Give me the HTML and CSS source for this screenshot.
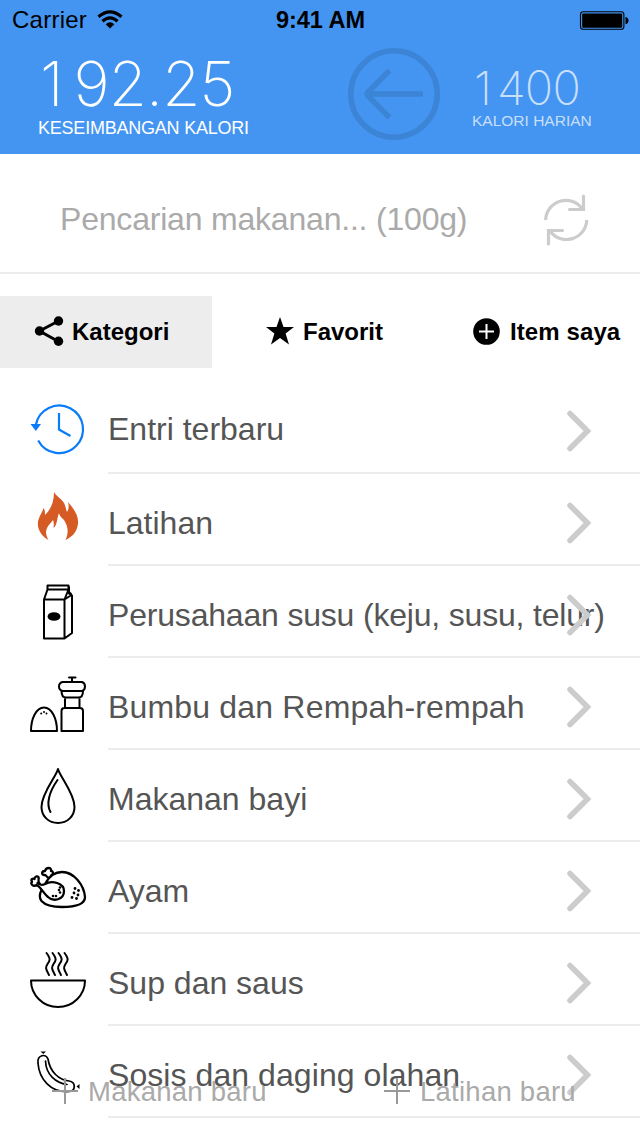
FILE: index.html
```html
<!DOCTYPE html>
<html lang="id">
<head>
<meta charset="utf-8">
<title>Kalori</title>
<link rel="stylesheet" href="styles.css">
</head>
<body>
<main class="screen">
  <header class="header">
    <div class="status">
      <div class="carrier"><span>Carrier</span>
        <svg width="26" height="20" viewBox="0 0 26 20"><g fill="none" stroke="#000" stroke-width="3.2"><path d="M1.5 6.8Q13-3.2 24.5 6.8"/><path d="M5.4 11.2Q13 4.5 20.6 11.2"/></g><path d="M8.7 14.2Q13 10.3 17.3 14.2L13 18.6Z"/></svg>
      </div>
      <div class="clock">9:41 AM</div>
      <svg class="battery" width="50" height="20" viewBox="0 0 50 20"><rect x="1.500" y=".8" width="43.4" height="17.4" rx="2.8" fill="none" stroke="#000" stroke-width="1.1"/><rect x="3.200" y="2.4" width="40" height="14.4" rx="1.2"/><path d="M46.500 6q3 .6 3 3.6t-3 3.6z"/></svg>
    </div>
    <div class="totals">
      <div class="balance"><div class="balance-value"><span class="lead">1</span>92.25</div><div class="balance-label">KESEIMBANGAN KALORI</div></div>
      <svg class="back" width="92" height="92" viewBox="0 0 92 92"><g fill="none" stroke="#3c84d5" stroke-width="5.6"><circle cx="46" cy="46" r="43.2"/><path d="M75 46H20M41.500 22.500L20 44Q18.500 46 20 48L41.500 69.500"/></g></svg>
      <div class="daily"><div class="daily-value"><span class="daily-lead">1</span>400</div><div class="daily-label">KALORI HARIAN</div></div>
    </div>
  </header>
  <section class="search">
    <span class="placeholder">Pencarian makanan... (100g)</span>
    <svg class="refresh" width="48" height="54" viewBox="0 0 48 54"><g fill="none" stroke="#ccc" stroke-width="3.200"><path d="M3.600 26A20.300 20.300 0 0 1 40.500 15M44.800 26A20.300 20.300 0 0 1 8 37"/><path stroke-linecap="round" d="M41.500 2V15.500H27.500M6.500 50V36.500H20.500"/></g></svg>
  </section>
  <nav class="tabs">
    <div class="tab tab-category"><svg width="30" height="30" viewBox="0 0 30 30"><path d="M24.500 5L5.500 15L24.500 25.500" fill="none" stroke="#000" stroke-width="3"/><circle cx="24.500" cy="5" r="4.700"/><circle cx="5.500" cy="15" r="4.700"/><circle cx="24.500" cy="25.200" r="4.700"/></svg><span>Kategori</span></div>
    <div class="tab tab-favorite"><svg width="28" height="28" viewBox="0 0 28 28"><path d="M14 0L17.500 10H28L19.600 16.600L23 27.500L14 21L5 27.500L8.400 16.600L0 10H10.500Z"/></svg><span>Favorit</span></div>
    <div class="tab tab-items"><svg width="27" height="27" viewBox="0 0 27 27"><circle cx="13.500" cy="13.500" r="13.300"/><path d="M13.500 6V21M6 13.500H21" stroke="#fff" stroke-width="2"/></svg><span>Item saya</span></div>
  </nav>
  <ul class="list">
    <li class="row first"><svg class="icon" viewBox="0 0 60 60"><g fill="none" stroke="#087cf9" stroke-width="2.200"><path d="M7.800 26A23.800 23.800 0 1 1 10.200 41.500"/><path d="M31 14V30.500L42.500 37"/></g><path d="M2.500 25H13L7.800 32Z" fill="#087cf9"/></svg><span class="name">Entri terbaru</span><svg class="chevron" viewBox="0 0 28 44"><path d="M5 4.500L22.500 22L5 39.500"/></svg></li>
    <li class="row"><svg class="icon" viewBox="0 0 60 60"><path fill="#d65a24" d="M26 1C28 5 33 7 36 12C38 16 38 19 39 21C41 18 41 14 40 11C45 17 51 24 50 33C49 41 44 46 37.500 49C41 42 40 35 36 29C33 26 31 24 31 22C29 27 29 35 25.500 37C26 34 26 31 25 29C22 33 18 36 18 42Q18.500 46 20.500 49C15 46 11 41 10 35C9 27 14 23 15.500 17C17 19 17 21 17 24C23 18 26 11 26 1Z"/></svg><span class="name">Latihan</span><svg class="chevron" viewBox="0 0 28 44"><path d="M5 4.500L22.500 22L5 39.500"/></svg></li>
    <li class="row"><svg class="icon line milk" viewBox="0 0 60 60"><path d="M16 17.500H36.500V56.500H16ZM19.500 3.500H40.500V7.500H19.500ZM19.500 7.500L16 17.500M40.500 7.500L36.500 17.500M41 5V11.500L44 13.500V51L36.500 56.500M36.500 17.500L43.500 13M40 9L43 12"/><ellipse cx="26" cy="34.500" rx="5.500" ry="3.300" fill="#000"/></svg><span class="name long">Perusahaan susu (keju, susu, telur)</span><svg class="chevron" viewBox="0 0 28 44"><path d="M5 4.500L22.500 22L5 39.500"/></svg></li>
    <li class="row"><svg class="icon line pepper" viewBox="0 0 60 60"><path d="M3 57C3 45 8 33.500 16 33.500S29 45 29 57ZM33.500 57V37Q33.500 34 36.500 34H52Q55 34 55 37V57ZM37 34V23.500H51.500V34M33.500 17C33.500 21 34.500 23.500 38 23.500H50.500C54 23.500 55 21 55 17M34.500 8H54Q57 9 57 12.500T54 17H34.500Q31 16 31 12.500T34.500 8ZM44 8V4M41 3.500H47.500"/><g fill="#000" stroke="none"><circle cx="13.200" cy="39.500" r="1"/><circle cx="16" cy="38" r="1"/><circle cx="18.500" cy="39.500" r="1"/></g></svg><span class="name bumbu">Bumbu dan Rempah-rempah</span><svg class="chevron" viewBox="0 0 28 44"><path d="M5 4.500L22.500 22L5 39.500"/></svg></li>
    <li class="row"><svg class="icon line drop" viewBox="0 0 60 60"><path d="M30 3C28 11 13.500 27 13.500 41C13.500 50 20.500 57 30 57S46.500 50 46.500 41C46.500 27 32 11 30 3ZM29.500 14C21 26 18 38 22.500 46"/></svg><span class="name">Makanan bayi</span><svg class="chevron" viewBox="0 0 28 44"><path d="M5 4.500L22.500 22L5 39.500"/></svg></li>
    <li class="row"><svg class="icon line chicken" viewBox="0 0 60 60"><g stroke-width="2.300"><path d="M17.500 17C22 9 28 6 34 6C46 6 56 19 57 31C57 38 48 41 34 41C25 41 18 40 13.500 35C11 32 12 27 13.500 24M9.500 17Q13 20 17 18C24 14 36 17 36 25C36 34 25 36 20 31C16 28 13 21 8.500 19M8.500 19C5.500 21 2 18.500 4 15.500C2.500 13.500 4.500 12 6.500 13C7 9 12 10 10.500 13.500Q10 16 12 18M20.500 12C18 11 19 9 16.500 9C13 9 13.500 5 17 5C18 1 24 1 23 5C26 5 25 9 23.500 9"/></g><g fill="#000" stroke="none"><circle cx="32" cy="21.500" r="1.300"/><circle cx="31" cy="24" r="1.300"/><circle cx="32" cy="26.500" r="1.300"/><circle cx="25" cy="30" r="1.300"/><circle cx="28" cy="30" r="1.300"/><circle cx="47" cy="22.500" r="1.400"/><circle cx="50.500" cy="24.500" r="1.400"/><circle cx="46" cy="27" r="1.400"/><circle cx="50" cy="29" r="1.400"/><circle cx="44" cy="31.500" r="1.400"/><circle cx="48.500" cy="32.500" r="1.400"/></g></svg><span class="name">Ayam</span><svg class="chevron" viewBox="0 0 28 44"><path d="M5 4.500L22.500 22L5 39.500"/></svg></li>
    <li class="row"><svg class="icon line" viewBox="0 0 60 60"><path d="M3 29.500H57C57 44 45 56 30 56S3 44 3 29.500ZM18.500 2C23 8 22 9.500 19.500 13C17 17 18 18 21 24M24.500 2C29 8 28 9.500 25.500 13C23 17 24 18 27 24M30.500 2C35 8 34 9.500 31.500 13C29 17 30 18 33 24M36.500 2C41 8 40 9.500 37.500 13C35 17 36 18 39 24"/></svg><span class="name">Sup dan saus</span><svg class="chevron" viewBox="0 0 28 44"><path d="M5 4.500L22.500 22L5 39.500"/></svg></li>
    <li class="row"><svg class="icon line sausage" viewBox="0 0 60 60"><g stroke-width="1.700"><path d="M10 15C9 7 18 5 20 11C22 24 31 32 41 33C48 34 48 43 41 43.500C23 45 11 31 10 15Z"/><path d="M17.500 13C18 27 28 35 39 36.500"/></g><path d="M12.500 3.500H18L15.200 6ZM51.500 36V41L48.500 38.500Z" fill="#000" stroke="none"/></svg><span class="name sosis">Sosis dan daging olahan</span><svg class="chevron" viewBox="0 0 28 44"><path d="M5 4.500L22.500 22L5 39.500"/></svg></li>
  </ul>
  <footer class="actions">
    <div class="action action-food"><svg width="26" height="26" viewBox="0 0 26 26"><path d="M13 0V26M0 13H26" stroke="#999" stroke-width="2"/></svg><span>Makanan baru</span></div>
    <div class="action action-exercise"><svg width="26" height="26" viewBox="0 0 26 26"><path d="M13 0V26M0 13H26" stroke="#999" stroke-width="2"/></svg><span>Latihan baru</span></div>
  </footer>
</main>
</body>
</html>
```
FILE: styles.css
```css
* { box-sizing: border-box; }
body { margin: 0; background: #fff; font-family: "Liberation Sans", Arial, sans-serif; }
svg { display: block; flex: none; }
.screen { position: relative; width: 640px; height: 1136px; overflow: hidden; background: #fff; }
.header { height: 154px; background: #4495f1; color: #fff; }
.status { display: grid; grid-template-columns: 1fr auto 1fr; align-items: center; height: 40px; padding: 0 11px 0 12px; color: #000; font-size: 24px; line-height: 40px; }
.carrier { display: flex; align-items: center; gap: 10px; letter-spacing: .25px; }
.clock { font-weight: 700; font-size: 23.500px; }
.battery { justify-self: end; margin-top: 1px; }
.totals { display: flex; height: 114px; padding-left: 38px; white-space: nowrap; }
.balance { width: 310px; padding-top: 12px; }
.balance-value { padding-left: 2px; font-family: Inter, "Liberation Sans", sans-serif; font-weight: 200; font-size: 62px; line-height: 64px; letter-spacing: -1px; }
.lead { letter-spacing: 10px; }
.balance-label { font-size: 18px; line-height: 24px; letter-spacing: -.22px; }
.back { margin-top: 8px; }
.daily { padding: 23px 0 0 32px; color: #c7dffb; }
.daily-value { padding-left: 2px; font-family: Inter, "Liberation Sans", sans-serif; font-weight: 200; font-size: 47px; line-height: 50px; letter-spacing: -.8px; }
.daily-lead { letter-spacing: 5px; }
.daily-label { font-size: 15.500px; line-height: 16px; }
.search { display: flex; align-items: center; justify-content: space-between; height: 120px; padding: 12px 50px 0 60px; border-bottom: 2px solid #ececec; color: #aaa; font-size: 32px; }
.placeholder { letter-spacing: -.2px; }
.refresh { margin-top: 4px; }
.tabs { display: flex; height: 72px; margin-top: 22px; font-size: 24px; font-weight: 700; }
.tab { display: flex; align-items: center; gap: 8px; white-space: nowrap; }
.tab svg { margin-bottom: 2px; }
.tab-category { width: 212px; padding-left: 34px; background: #ededed; }
.tab-favorite { width: 261px; padding-left: 54px; gap: 9px; }
.tab-items { gap: 10px; letter-spacing: .1px; }
.list { margin: 14px 0 0; padding: 0; list-style: none; }
.row { position: relative; display: flex; height: 92px; padding-left: 28px; color: #555; }
.row::after { content: ""; position: absolute; left: 108px; right: 0; bottom: 0; height: 2px; background: #ececec; }
.icon { width: 60px; height: 60px; margin: 17px 20px 0 0; }
.milk, .pepper, .drop { margin-top: 16px; }
.milk { margin-top: 15.500px; }
.chicken { margin-top: 24px; }
.sausage { margin-top: 22px; }
.line { fill: none; stroke: #000; stroke-width: 2; stroke-linejoin: round; stroke-linecap: round; }
.name { padding-top: 31px; font-size: 32px; line-height: 37px; white-space: nowrap; }
.first .name { padding-top: 29px; }
.long { letter-spacing: -.19px; }
.bumbu { letter-spacing: .18px; }
.sosis { letter-spacing: .07px; }
.chevron { position: absolute; left: 565px; top: 26.500px; width: 28px; height: 44px; fill: none; stroke: #ccc; stroke-width: 5.5; stroke-linecap: round; }
.actions { position: absolute; left: 0; right: 0; bottom: 26px; display: flex; height: 38px; padding-left: 52px; color: #aaa; font-size: 27.500px; letter-spacing: .25px; }
.action { display: flex; align-items: center; gap: 10px; white-space: nowrap; }
.action span { padding-top: 2px; }
.action-food { width: 332px; }
```
